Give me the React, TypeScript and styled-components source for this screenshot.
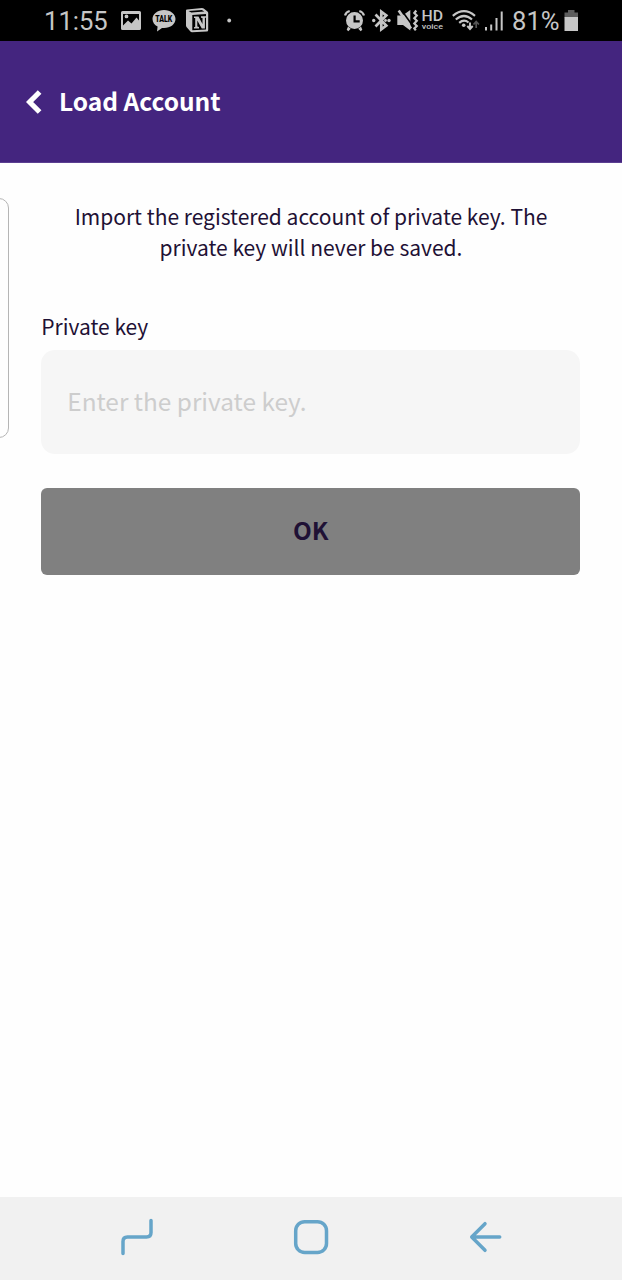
import React from "react";
import styled, { createGlobalStyle } from "styled-components";

const GlobalStyle = createGlobalStyle`
  *, *::before, *::after { box-sizing: border-box; }
  body { margin: 0; background: #fff; }
`;

const Screen = styled.div`
  position: relative;
  display: flex;
  flex-direction: column;
  height: 1280px;
  width: 622px;
  overflow: hidden;
  background: #fefefe;
  color: #1f1135;
  font-family: "Noto Sans CJK KR", "Noto Sans", sans-serif;
`;

const StatusBar = styled.header`
  display: flex;
  align-items: center;
  flex: none;
  height: 41px;
  padding: 0 43px 0 44px;
  background: #000;
  color: #c6c6c6;
  font-family: Roboto, sans-serif;
`;

const StatusText = styled.span<{ $width: number; $gap?: number }>`
  flex: none;
  width: ${(p) => p.$width}px;
  margin-left: ${(p) => p.$gap ?? 0}px;
  padding-top: 2px;
  font-size: 25.6px;
  line-height: 41px;
  white-space: nowrap;
`;

const StatusIcon = styled.svg<{ $gap?: number }>`
  display: block;
  flex: none;
  height: 41px;
  margin-left: ${(p) => p.$gap ?? 0}px;
  fill: currentColor;
`;

const Spacer = styled.div`
  flex: 1;
`;

const TitleBar = styled.div`
  display: flex;
  align-items: center;
  flex: none;
  height: 122px;
  padding: 0 26px;
  gap: 17px;
  background: #44257f;
  border-bottom: 1px solid #5b3f91;
  color: #fff;
`;

const BackIcon = styled.svg`
  display: block;
  width: 16px;
  height: 24px;
  fill: none;
  stroke: currentColor;
  stroke-width: 5.2;
`;

const Title = styled.h1`
  margin: 0;
  padding-bottom: 2px;
  font-size: 24.5px;
  line-height: 36px;
  font-weight: 700;
  white-space: nowrap;
`;

const Content = styled.main`
  display: flex;
  flex-direction: column;
  flex: 1;
  padding: 38px 41.3px 0;
`;

const Intro = styled.p`
  margin: 0;
  font-size: 21px;
  line-height: 31px;
  text-align: center;
`;

const Label = styled.label`
  margin-top: 45px;
  font-size: 21px;
  line-height: 36px;
`;

const KeyInput = styled.input`
  width: 539px;
  height: 104px;
  margin-top: 6px;
  padding: 0 26px 4px;
  border: 0;
  border-radius: 14px;
  outline: 0;
  background: #f6f6f6;
  color: inherit;
  font-family: inherit;
  font-size: 24.4px;
  &::placeholder {
    color: #cdcdcd;
    opacity: 1;
  }
`;

const OkButton = styled.button`
  width: 539px;
  height: 87px;
  margin-top: 34px;
  padding: 0 0 5px;
  border: 0;
  border-radius: 6px;
  background: #808080;
  color: #1f1135;
  font-family: inherit;
  font-size: 24.4px;
  font-weight: 700;
`;

const EdgeHandle = styled.div`
  position: absolute;
  left: -12px;
  top: 198px;
  width: 21px;
  height: 240px;
  border: 1px solid #b5b5b5;
  border-radius: 10px;
`;

const NavBar = styled.nav`
  display: flex;
  align-items: center;
  justify-content: space-between;
  flex: none;
  height: 83px;
  padding: 0 117px 4px;
  background: #f1f1f1;
`;

const NavIcon = styled.svg`
  display: block;
  width: 40px;
  height: 40px;
  fill: none;
  stroke: #66a5c9;
  stroke-width: 3.5;
  stroke-linecap: round;
  stroke-linejoin: round;
`;

export default function App() {
  return (
    <Screen>
      <GlobalStyle />
      <StatusBar>
        <StatusText $width={77}>11:55</StatusText>
        <StatusIcon width="20" viewBox="0 0 20 41">
          <path
            fillRule="evenodd"
            d="M1.500 11h17Q20 11 20 12.500v16Q20 30 18.500 30h-17Q0 30 0 28.500v-16Q0 11 1.500 11ZM2 25.500l5-5 3.500 3 5-6 2.500 3V14H2ZM5.500 14.500a1.900 1.900 0 1 1 0 3.800a1.900 1.900 0 0 1 0-3.800Z"
          />
        </StatusIcon>
        <StatusIcon $gap={11} width="24" viewBox="0 0 24 41">
          <path d="M12 10c6.500 0 11.500 4 11.500 9s-5 9-11.500 9l-2-.1L5 31.500l.6-5C2.500 25 .5 22.300.5 19c0-5 5-9 11.500-9Z" />
          <text x="11.700" y="22.300" fontSize="9" fontWeight="900" fill="#000" textAnchor="middle" textLength="17" lengthAdjust="spacingAndGlyphs">TALK</text>
        </StatusIcon>
        <StatusIcon $gap={9} width="24" viewBox="0 0 24 41">
          <path d="M1 10.500Q1 9.500 2 9.400L17 8q1 0 1.700.5L22.500 11.500q.7.500.7 1.500v17q0 1.500-1.500 1.600L7 32.300q-1 0-1.600-.8L1.500 27Q1 26.300 1 25.500Z" />
          <path fill="#000" d="M3.500 11 16.800 9.900l2.500 1.700-13 .9ZM7.300 15l13.700-1v15.500L7.300 30.300Z" />
          <path d="M9 16.500h4.500l4 7.500v-5.900l-1.500-.4v-1.500H21v1.400l-1.100.5v10.500h-3.100l-4.500-8v6l1.700.5v1.500H9v-1.400l1.200-.5v-8.600L9 18Z" />
        </StatusIcon>
        <StatusIcon $gap={18} width="5" viewBox="0 0 5 41">
          <circle cx="2.200" cy="20.500" r="1.900" />
        </StatusIcon>
        <Spacer />
        <StatusIcon width="22" viewBox="0 0 22 41">
          <path
            fillRule="evenodd"
            d="M10.500 12.100a8.500 8.500 0 1 1 0 17a8.500 8.500 0 0 1 0-17ZM9.500 15.500h2.200v4.800h4v2.200H9.500Z"
          />
          <path d="M4 26.500 6.800 28.800l-2.500 2.500L2.700 29.800ZM17 26.500 14.200 28.800l2.500 2.500L18.300 29.800Z" />
          <path fill="none" stroke="currentColor" strokeWidth="2.200" d="M1 15.500Q2 12 5.700 11M20 15.500Q19 12 15.300 11" />
        </StatusIcon>
        <StatusIcon $gap={6} width="19" viewBox="0 0 19 41">
          <path fill="none" stroke="currentColor" strokeWidth="2.700" d="m3.500 14.500 10.800 11L9.300 29.300V11.700l5 3.800-10.800 11" />
          <circle cx="1.700" cy="20.500" r="1.700" />
          <circle cx="17" cy="20.500" r="1.700" />
          <circle cx="13.500" cy="20.500" r="1.400" />
        </StatusIcon>
        <StatusIcon $gap={6} width="22" viewBox="0 0 22 41">
          <path d="M.3 15.500h5.200L13.300 10v20.500L6 25H.3Z" />
          <path fill="none" stroke="#000" strokeWidth="1.600" d="m4 9.500 11.500 16" />
          <path fill="none" stroke="currentColor" strokeWidth="2.600" d="m1.700 10.500 12.300 18" />
          <path fill="none" stroke="currentColor" strokeWidth="2.200" d="m19.300 10.500-2 2.500 2.500 2.600-2.500 2.600 2.500 2.600-2.500 2.600 2.500 2.600-2.500 2.400 1.500 2" />
        </StatusIcon>
        <StatusIcon $gap={2} width="24" viewBox="0 0 24 41">
          <text x="0.500" y="21.200" fontSize="13.800" fontWeight="500" textLength="21.500" lengthAdjust="spacingAndGlyphs">HD</text>
          <text x="0.800" y="29" fontSize="8" fontWeight="500" textLength="21.200" lengthAdjust="spacingAndGlyphs">voice</text>
        </StatusIcon>
        <StatusIcon $gap={7} width="28" viewBox="0 0 28 41">
          <path fill="none" stroke="currentColor" strokeWidth="2.200" d="M.8 15.800Q12 6.500 23 15.800M3.800 19.500Q12 12.500 20 19.500M7.200 22.800q4.800-4 9.300-.3" />
          <circle cx="11.700" cy="25.300" r="1.800" />
          <path fill="none" stroke="currentColor" strokeWidth="1.900" d="M18 22.500v6M15.300 26l2.700 3 2.700-3" />
          <path fill="none" stroke="#555" strokeWidth="1.700" d="M24.200 28v-6M21.500 24.500l2.700-3 2.700 3" />
        </StatusIcon>
        <StatusIcon $gap={4} width="20" viewBox="0 0 20 41">
          <path d="M1 27h2v3.500H1ZM6.200 24.500h2v6h-2ZM11.500 18h2v12.500h-2ZM16.700 11.500h2v19h-2Z" />
        </StatusIcon>
        <StatusText $width={47} $gap={8}>81%</StatusText>
        <StatusIcon $gap={5} width="15" viewBox="0 0 15 41">
          <path fill="#5c5c5c" d="M4 10h6.500v2.500H14v5H.5v-5H4Z" />
          <path d="M.5 17H14v14H.5Z" />
        </StatusIcon>
      </StatusBar>
      <TitleBar>
        <BackIcon viewBox="0 0 16 24">
          <path d="M13.600 2 3.600 12l10 10" />
        </BackIcon>
        <Title>Load Account</Title>
      </TitleBar>
      <Content>
        <Intro>
          Import the registered account of private key. The
          <br />
          private key will never be saved.
        </Intro>
        <Label htmlFor="private-key">Private key</Label>
        <KeyInput id="private-key" placeholder="Enter the private key." />
        <OkButton type="button">OK</OkButton>
      </Content>
      <EdgeHandle />
      <NavBar>
        <NavIcon viewBox="0 0 40 40">
          <path d="M6 36.500V24.500Q6 20 10.500 20H29.500Q34 20 34 15.500V3.500" />
        </NavIcon>
        <NavIcon viewBox="0 0 40 40">
          <rect x="4.700" y="4.700" width="30.800" height="30.800" rx="9" />
        </NavIcon>
        <NavIcon viewBox="0 0 40 40">
          <path d="M34.700 20H7M20 6.700 6.700 20 20 33.300" />
        </NavIcon>
      </NavBar>
    </Screen>
  );
}
